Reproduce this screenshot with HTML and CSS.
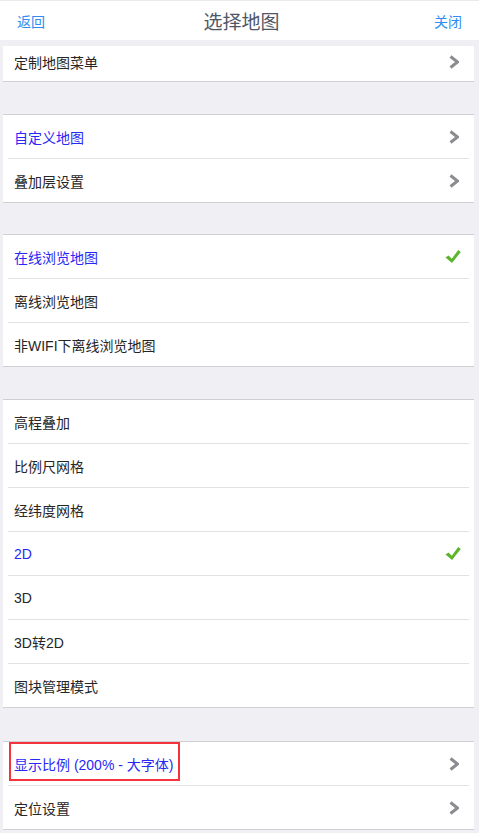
FILE: index.html
```html
<!DOCTYPE html>
<html lang="zh">
<head>
    <meta charset="UTF-8">
    <meta name="viewport" content="width=device-width, initial-scale=1.0">
    <title>选择地图</title>
    <link rel="stylesheet" href="styles.css">
</head>
<body>
    <div class="header">
        <a class="nav-btn">返回</a>
        <div class="title">选择地图</div>
        <a class="nav-btn">关闭</a>
    </div>

    <div class="group first">
        <div class="row short"><span class="label">定制地图菜单</span><svg class="chev" viewBox="0 0 10 14"><polyline points="1.5,1.5 8.5,7 1.5,12.5"/></svg></div>
    </div>

    <div class="group">
        <div class="row"><span class="label blue">自定义地图</span><svg class="chev" viewBox="0 0 10 14"><polyline points="1.5,1.5 8.5,7 1.5,12.5"/></svg></div>
        <div class="row"><span class="label">叠加层设置</span><svg class="chev" viewBox="0 0 10 14"><polyline points="1.5,1.5 8.5,7 1.5,12.5"/></svg></div>
    </div>

    <div class="group tight">
        <div class="row"><span class="label blue">在线浏览地图</span><svg class="check" viewBox="0 0 16 15"><path d="M0.5 8.5 L3.5 6.5 L6.8 9.8 L13.2 1 L15.8 3 L7 14 Z"/></svg></div>
        <div class="row"><span class="label">离线浏览地图</span></div>
        <div class="row"><span class="label">非WIFI下离线浏览地图</span></div>
    </div>

    <div class="group">
        <div class="row"><span class="label">高程叠加</span></div>
        <div class="row"><span class="label">比例尺网格</span></div>
        <div class="row"><span class="label">经纬度网格</span></div>
        <div class="row"><span class="label blue">2D</span><svg class="check" viewBox="0 0 16 15"><path d="M0.5 8.5 L3.5 6.5 L6.8 9.8 L13.2 1 L15.8 3 L7 14 Z"/></svg></div>
        <div class="row"><span class="label">3D</span></div>
        <div class="row"><span class="label">3D转2D</span></div>
        <div class="row"><span class="label">图块管理模式</span></div>
    </div>

    <div class="group last">
        <div class="row"><span class="label blue">显示比例 (200% - 大字体)</span><span class="mark"></span><svg class="chev" viewBox="0 0 10 14"><polyline points="1.5,1.5 8.5,7 1.5,12.5"/></svg></div>
        <div class="row"><span class="label">定位设置</span><svg class="chev" viewBox="0 0 10 14"><polyline points="1.5,1.5 8.5,7 1.5,12.5"/></svg></div>
    </div>
</body>
</html>
```

FILE: styles.css
```css
body {
    margin: 0;
    background: #efeff4;
    font-family: "Liberation Sans", "Noto Sans CJK SC", sans-serif;
    font-size: 14px;
    color: #262626;
    height: 833px;
    overflow: hidden;
}
.header {
    display: flex;
    align-items: center;
    justify-content: space-between;
    height: 39px;
    background: #fff;
    border-top: 1px solid #e9e9ee;
    padding: 0 17px;
}
.nav-btn {
    color: #2e8cf2;
    font-size: 14px;
}
.title {
    font-size: 19px;
    color: #4f5667;
    padding-left: 4px;
}
.group {
    background: #fff;
    margin: 32px 5px 0 3px;
    border-top: 1px solid #cfcfd4;
    border-bottom: 1px solid #cfcfd4;
}
.group.first {
    margin-top: 6px;
    border-top: none;
}
.group.tight {
    margin-top: 31px;
}
.group.last {
    margin-top: 33px;
}
.row {
    position: relative;
    display: flex;
    align-items: center;
    justify-content: space-between;
    height: 43px;
    margin: 0 5px;
    padding: 0 10px 0 6px;
    border-top: 1px solid #e2e2e4;
}
.row:first-child {
    border-top: none;
}
.row.short {
    height: 31px;
    padding-bottom: 4px;
}
.label.blue {
    color: #2828f5;
}
.chev {
    width: 10px;
    height: 14px;
    fill: none;
    stroke: #8c8c90;
    stroke-width: 3;
}
.check {
    width: 16px;
    height: 15px;
    fill: #5bb62c;
    margin-right: -2px;
}
.mark {
    position: absolute;
    left: 1px;
    top: 0;
    width: 167px;
    height: 35px;
    border: 2px solid #f4333d;
}
```
